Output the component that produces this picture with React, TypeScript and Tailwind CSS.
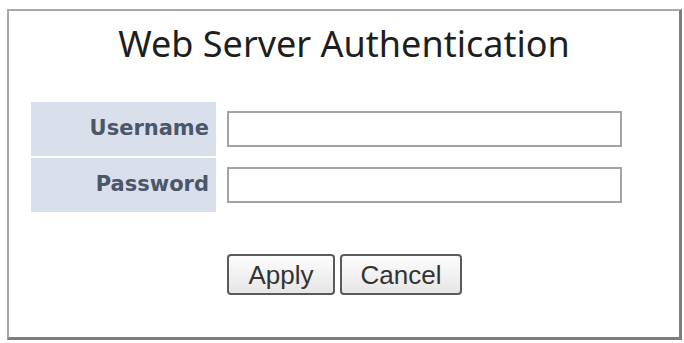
export default function App() {
  return (
    <div className="min-h-[343px] w-[684px] bg-white pl-[7px] pt-[9px]">
      <div className="h-[331px] w-[675px] border-l-2 border-t-2 border-r-[3px] border-b-[3px] border-l-[#a9a9a9] border-t-[#a9a9a9] border-r-[#7d7d7d] border-b-[#7d7d7d] bg-white">
        <div className="h-[91px] pt-[11px] text-center">
          <h1 className="font-['Noto_Sans',sans-serif] text-[36px] leading-[44px] text-[#1e1e1e]">
            Web Server Authentication
          </h1>
        </div>

        <form className="pl-[22px]">
          <div className="grid grid-cols-[185px_395px] gap-x-[11px] gap-y-[2px]">
            <label className="flex h-[54px] items-center justify-end bg-[#d9e0ec] pr-[7px] font-['DejaVu_Sans',sans-serif] text-[21px] font-bold text-[#4b566a]">
              Username
            </label>
            <div className="flex items-center">
              <input
                type="text"
                className="h-[36px] w-[395px] border-2 border-[#a3a3a3] bg-white outline-none"
              />
            </div>
            <label className="flex h-[54px] items-center justify-end bg-[#d9e0ec] pr-[7px] font-['DejaVu_Sans',sans-serif] text-[21px] font-bold text-[#4b566a]">
              Password
            </label>
            <div className="flex items-center">
              <input
                type="password"
                className="h-[36px] w-[395px] border-2 border-[#a3a3a3] bg-white outline-none"
              />
            </div>
          </div>

          <div className="mt-[42px] flex gap-[5px] pl-[196px]">
            <button
              type="button"
              className="h-[41px] w-[108px] rounded-[4px] border-2 border-[#5a5a5a] bg-gradient-to-b from-[#fdfdfd] to-[#e6e6e6] font-['Liberation_Sans',sans-serif] text-[26px] text-[#333]"
            >
              Apply
            </button>
            <button
              type="button"
              className="h-[41px] w-[122px] rounded-[4px] border-2 border-[#5a5a5a] bg-gradient-to-b from-[#fdfdfd] to-[#e6e6e6] font-['Liberation_Sans',sans-serif] text-[26px] text-[#333]"
            >
              Cancel
            </button>
          </div>
        </form>
      </div>
    </div>
  );
}
